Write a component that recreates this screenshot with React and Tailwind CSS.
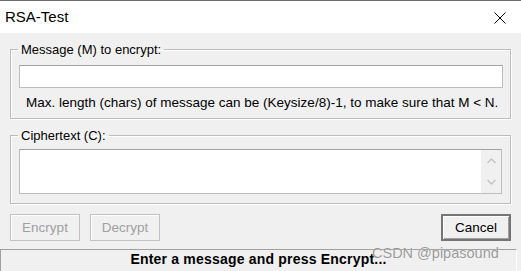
import React from "react";

export default function App() {
  return (
    <div className="relative w-[521px] h-[271px] overflow-hidden bg-[#f0f0f0] text-black font-['Liberation_Sans',Arial,sans-serif] flex flex-col">
      <div className="h-px bg-[#6d6d6d]" />
      <div className="h-[32px] bg-white flex items-start justify-between">
        <span className="pl-[5px] pt-[8px] text-[15px] leading-[15px]">RSA-Test</span>
        <svg className="mt-[11px] mr-[15px]" width="12" height="12" viewBox="0 0 12 12">
          <path d="M0.5 0.5 L11.5 11.5 M11.5 0.5 L0.5 11.5" stroke="#000" strokeWidth="1" fill="none" />
        </svg>
      </div>

      <div className="px-[10px] pt-[9px] flex flex-col">
        <fieldset className="h-[77px] border border-[#bcbcbc] shadow-[inset_1px_1px_0_#ffffff,1px_1px_0_#ffffff]">
          <legend className="ml-[7px] px-[3px] text-[13px] leading-[15px]">Message (M) to encrypt:</legend>
          <div className="mt-[8px] ml-[8px] mr-[7px] h-[23px] bg-white border border-[#bdbdbd] border-t-[#a3a3a3]" />
          <div className="mt-[7px] pl-[15px] text-[13.5px] leading-[15px] whitespace-nowrap">
            Max. length (chars) of message can be (Keysize/8)-1, to make sure that M &lt; N.
          </div>
        </fieldset>

        <fieldset className="mt-[9px] h-[76px] border border-[#bcbcbc] shadow-[inset_1px_1px_0_#ffffff,1px_1px_0_#ffffff]">
          <legend className="ml-[7px] px-[3px] text-[13px] leading-[15px]">Ciphertext (C):</legend>
          <div className="mt-[6px] ml-[8px] mr-[8px] h-[45px] bg-white border border-[#bdbdbd] border-t-[#a3a3a3] flex">
            <div className="flex-1" />
            <div className="w-[20px] bg-[#f0f0f0] flex flex-col items-center justify-between py-[8px]">
              <svg width="9" height="6" viewBox="0 0 9 6">
                <path d="M0.5 5 L4.5 1 L8.5 5" stroke="#c4c4c4" strokeWidth="1.4" fill="none" />
              </svg>
              <svg width="9" height="6" viewBox="0 0 9 6">
                <path d="M0.5 1 L4.5 5 L8.5 1" stroke="#c4c4c4" strokeWidth="1.4" fill="none" />
              </svg>
            </div>
          </div>
        </fieldset>

        <div className="mt-[10px] flex justify-between">
          <div className="flex gap-[10px]">
            <div className="w-[70px] h-[27px] border border-[#c2c2c2] shadow-[inset_1px_1px_0_#ffffff] flex items-center justify-center text-[13.5px] leading-[15px] text-[#a0a0a0]">
              Encrypt
            </div>
            <div className="w-[70px] h-[27px] border border-[#c2c2c2] shadow-[inset_1px_1px_0_#ffffff] flex items-center justify-center text-[13.5px] leading-[15px] text-[#a0a0a0]">
              Decrypt
            </div>
          </div>
          <div className="w-[70px] h-[27px] border-2 border-[#757575] shadow-[inset_1px_1px_0_#ffffff,inset_-1px_-1px_0_#a0a0a0] flex items-center justify-center text-[13.5px] leading-[15px] text-black">
            Cancel
          </div>
        </div>
      </div>

      <div className="mt-[8px] mr-[4px] h-[22px] border-t border-l border-[#a0a0a0] border-r border-r-white pt-[2px] text-center text-[14px] tracking-[0.2px] leading-[15px] font-bold">
        Enter a message and press Encrypt...
      </div>

      <div className="absolute left-[372px] top-[246px] text-[14.5px] leading-[15px] text-[#9a9a9a] [text-shadow:0_0_1px_#ffffff] whitespace-nowrap">
        CSDN @pipasound
      </div>
    </div>
  );
}
